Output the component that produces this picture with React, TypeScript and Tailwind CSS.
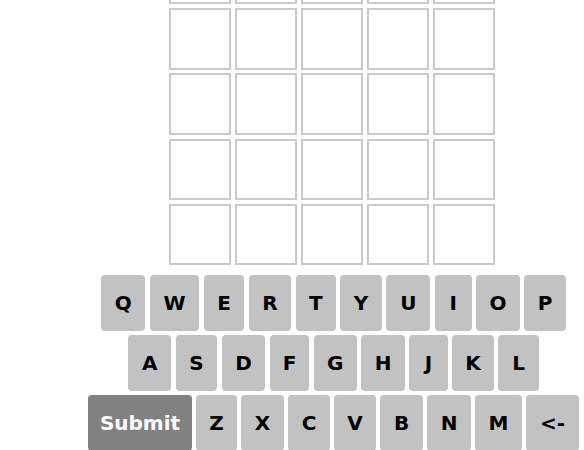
import React from "react";

const row1: [string, number][] = [
  ["Q", 44], ["W", 49.5], ["E", 40.5], ["R", 42.5], ["T", 40], ["Y", 41.5], ["U", 44], ["I", 37], ["O", 43.5], ["P", 41.5],
];
const row2: [string, number][] = [
  ["A", 43], ["S", 41.5], ["D", 43.5], ["F", 39.5], ["G", 43], ["H", 43.5], ["J", 38.5], ["K", 41.5], ["L", 40.5],
];
const row3: [string, number][] = [
  ["Z", 40.5], ["X", 42.5], ["C", 41.5], ["V", 41.5], ["B", 42.5], ["N", 43.5], ["M", 46.5], ["<-", 52.5],
];

function Key({ label, width }: { label: string; width: number }) {
  return (
    <div
      className="h-[56px] shrink-0 rounded-[4px] bg-[#c2c2c2] flex items-center justify-center text-[20px] font-bold text-black"
      style={{ width }}
    >
      {label}
    </div>
  );
}

export default function App() {
  return (
    <div className="w-[584px] h-[450px] overflow-hidden bg-white" style={{ fontFamily: '"DejaVu Sans", Verdana, sans-serif' }}>
      <div className="w-[667px] flex flex-col items-center">
        <div className="mt-[-57.3px] mr-[3px] grid grid-cols-5 gap-x-1 gap-y-[3.8px]">
          {Array.from({ length: 25 }).map((_, i) => (
            <div key={i} className="w-[62px] h-[61.5px] border-2 border-[#cacaca] bg-white" />
          ))}
        </div>
        <div className="mt-[9.5px] flex flex-col items-center gap-1">
          <div className="flex gap-[4.5px]">
            {row1.map(([l, w]) => (
              <Key key={l} label={l} width={w} />
            ))}
          </div>
          <div className="flex gap-[4.5px]">
            {row2.map(([l, w]) => (
              <Key key={l} label={l} width={w} />
            ))}
          </div>
          <div className="flex gap-[4.5px]">
            <div className="h-[56px] w-[103.5px] shrink-0 rounded-[4px] bg-[#818181] flex items-center justify-center text-[20px] font-bold text-white">
              Submit
            </div>
            {row3.map(([l, w]) => (
              <Key key={l} label={l} width={w} />
            ))}
          </div>
        </div>
      </div>
    </div>
  );
}
